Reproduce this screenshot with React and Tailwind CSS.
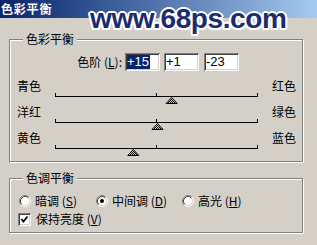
import React from 'react';

const cjk = "font-['Noto_Sans_CJK_SC','Noto_Sans',sans-serif]";

const sunken =
  'shadow-[inset_1px_1px_0_#808080,inset_-1px_-1px_0_#ffffff,inset_2px_2px_0_#404040,inset_-2px_-2px_0_#d4d0c8]';

function Group({ title, className, children }) {
  return (
    <div
      className={`relative w-[294px] border border-[#808080] shadow-[inset_1px_1px_0_#ffffff,1px_1px_0_#ffffff] ${className}`}
    >
      <span className="absolute left-[13px] top-[-8px] bg-[#d4d0c8] px-[3px] text-[12px] leading-[14px]">
        {title}
      </span>
      {children}
    </div>
  );
}

function Field({ value, selected, className = '' }) {
  return (
    <div
      className={`flex h-[18px] w-[35px] items-center bg-white pl-[2px] font-['Liberation_Sans',sans-serif] text-[13px] leading-[14px] ${sunken} ${className}`}
    >
      {selected ? <span className="bg-[#0a246a] pr-[1px] text-white">{value}</span> : <span>{value}</span>}
    </div>
  );
}

function Slider({ left, right, value, id }) {
  const cx = ((value + 100) / 200) * 202 + 0.5;
  return (
    <div className="flex flex-col">
      <div className="flex h-[14px] justify-between pl-[7px] pr-[6px] text-[12px] leading-[14px]">
        <span>{left}</span>
        <span>{right}</span>
      </div>
      <svg width="204" height="12" className="ml-[45px] block">
        <defs>
          <pattern id={`dots${id}`} width="2" height="2" patternUnits="userSpaceOnUse">
            <rect width="2" height="2" fill="#d4d0c8" />
            <rect width="1" height="1" fill="#000" />
            <rect x="1" y="1" width="1" height="1" fill="#000" />
          </pattern>
        </defs>
        <rect x="0" y="3" width="203" height="1" fill="#000" />
        <rect x="0" y="-1" width="1" height="4" fill="#000" />
        <rect x="101" y="-1" width="1" height="4" fill="#000" />
        <rect x="202" y="-1" width="1" height="4" fill="#000" />
        <polygon
          points={`${cx},4.5 ${cx + 5.5},10.5 ${cx - 5.5},10.5`}
          fill={`url(#dots${id})`}
          stroke="#000"
          strokeWidth="1"
        />
      </svg>
    </div>
  );
}

function Radio({ checked }) {
  return (
    <svg width="12" height="12" className="block shrink-0">
      <circle cx="6" cy="6" r="5" fill="#fff" />
      <path d="M2.11 9.89 A5.5 5.5 0 0 1 9.89 2.11" fill="none" stroke="#808080" />
      <path d="M9.89 2.11 A5.5 5.5 0 0 1 2.11 9.89" fill="none" stroke="#ffffff" />
      <path d="M2.82 9.18 A4.5 4.5 0 0 1 9.18 2.82" fill="none" stroke="#404040" />
      <path d="M9.18 2.82 A4.5 4.5 0 0 1 2.82 9.18" fill="none" stroke="#d4d0c8" />
      {checked && <circle cx="6" cy="6" r="2" fill="#000" />}
    </svg>
  );
}

function Option({ label, keyChar, checked, className }) {
  return (
    <div className={`flex items-center gap-[4px] ${className}`}>
      <Radio checked={checked} />
      <span>
        {label} (<u>{keyChar}</u>)
      </span>
    </div>
  );
}

export default function App() {
  return (
    <div className={`h-[245px] w-[317px] overflow-hidden bg-[#d4d0c8] text-black ${cjk}`}>
      <div className="relative">
        <div className="flex h-[18px] items-center bg-gradient-to-r from-[#0a246a] to-[#a6caf0] pl-[1px] text-[12px] font-bold tracking-[0.8px] text-white">
          色彩平衡
        </div>
        <div className="absolute left-[90px] top-[5px] font-['Liberation_Sans',sans-serif] text-[28px] font-bold leading-[28px] tracking-[-0.4px] text-[#1e2b6c] [text-shadow:2px_0_#fff,-2px_0_#fff,0_2px_#fff,0_-2px_#fff,1.5px_1.5px_#fff,-1.5px_-1.5px_#fff,1.5px_-1.5px_#fff,-1.5px_1.5px_#fff]">
          www.68ps.com
        </div>
      </div>

      <div className="pl-[9px] pt-[21px]">
        <Group title="色彩平衡" className="pb-[4px] pt-[13px]">
          <div className="flex h-[18px] items-center">
            <span className="w-[112px] text-right text-[12px] leading-[14px]">
              色阶 (<u>L</u>):
            </span>
            <Field value="+15" selected className="ml-[3px]" />
            <Field value="+1" className="ml-[4px]" />
            <Field value="-23" className="ml-[5px]" />
          </div>
          <div className="mt-[8px] flex flex-col">
            <Slider id="1" left="青色" right="红色" value={15} />
            <Slider id="2" left="洋红" right="绿色" value={1} />
            <Slider id="3" left="黄色" right="蓝色" value={-23} />
          </div>
        </Group>

        <Group title="色调平衡" className="mt-[16px] pb-[6px] pt-[15px]">
          <div className="flex h-[14px] items-center pl-[9px] text-[12px] leading-[14px]">
            <Option label="暗调" keyChar="S" className="w-[77px]" />
            <Option label="中间调" keyChar="D" checked className="w-[86px]" />
            <Option label="高光" keyChar="H" />
          </div>
          <div className="mt-[4px] flex h-[14px] items-center gap-[5px] pl-[8px] text-[12px] leading-[14px]">
            <div className={`relative h-[13px] w-[13px] bg-white ${sunken}`}>
              <svg width="13" height="13" className="block">
                <polyline points="3.5,6 5.5,8.5 9.5,3.5" fill="none" stroke="#000" strokeWidth="1.8" />
              </svg>
            </div>
            <span>
              保持亮度 (<u>V</u>)
            </span>
          </div>
        </Group>
      </div>
    </div>
  );
}
